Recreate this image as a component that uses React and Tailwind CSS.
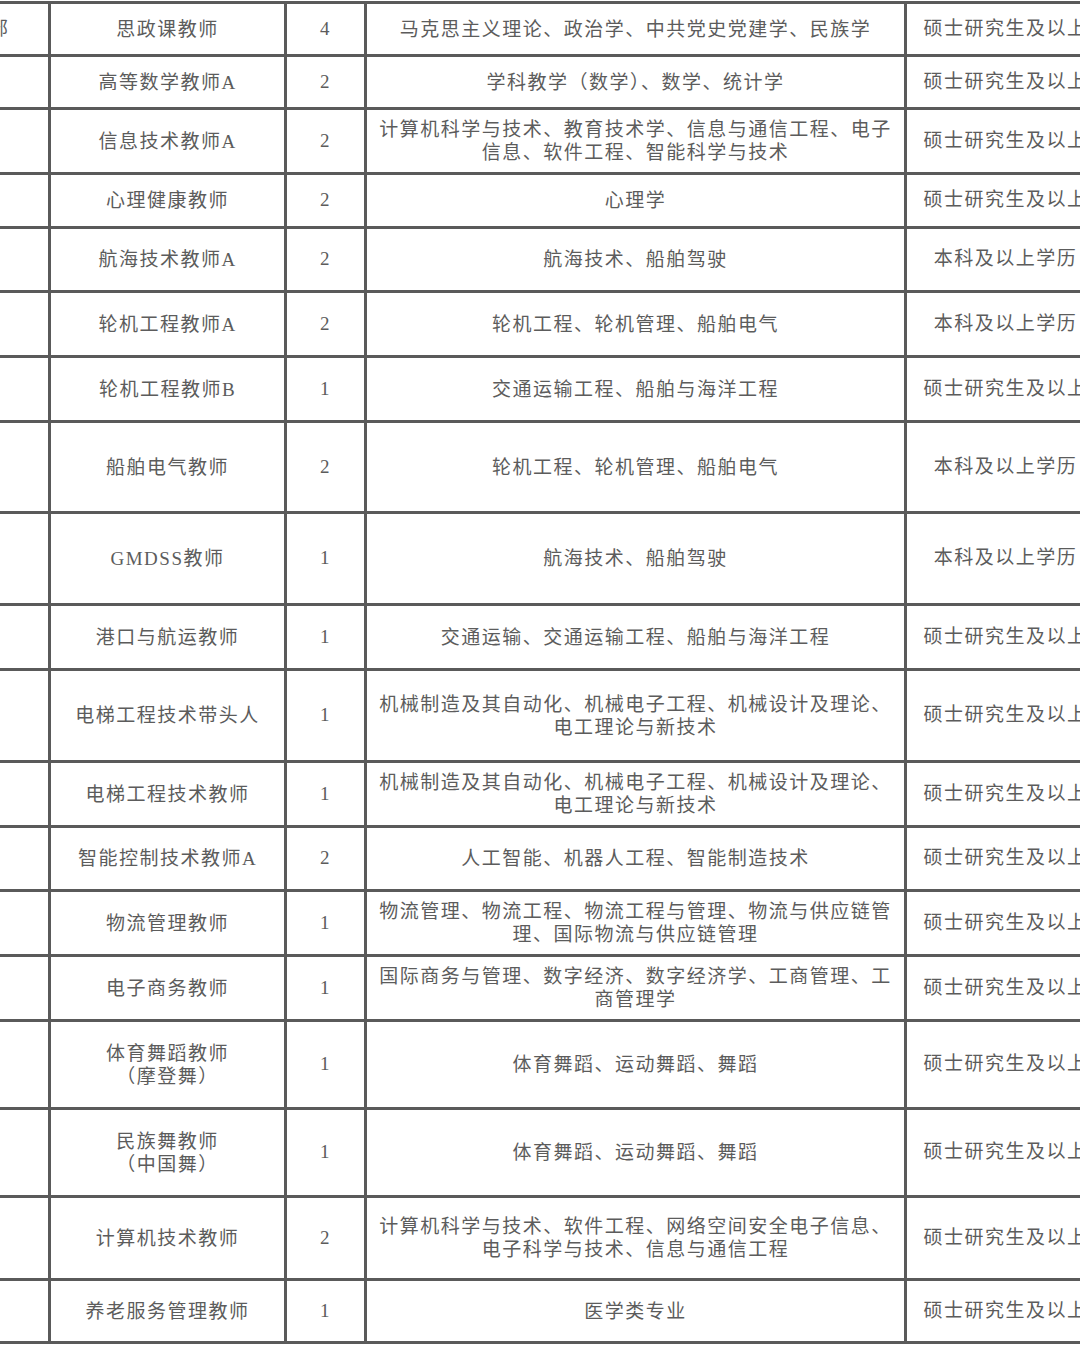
import React from "react";

const BK = "本科及以上学历";
const MS = "硕士研究生及以上";

const rows = [
  { h: "h-[53px]", name: ["思政课教师"], n: "4", major: ["马克思主义理论、政治学、中共党史党建学、民族学"], edu: MS, dept: "部" },
  { h: "h-[53px]", name: ["高等数学教师A"], n: "2", major: ["学科教学（数学）、数学、统计学"], edu: MS },
  { h: "h-[65px]", name: ["信息技术教师A"], n: "2", major: ["计算机科学与技术、教育技术学、信息与通信工程、电子", "信息、软件工程、智能科学与技术"], edu: MS },
  { h: "h-[54px]", name: ["心理健康教师"], n: "2", major: ["心理学"], edu: MS },
  { h: "h-[64px]", name: ["航海技术教师A"], n: "2", major: ["航海技术、船舶驾驶"], edu: BK },
  { h: "h-[65px]", name: ["轮机工程教师A"], n: "2", major: ["轮机工程、轮机管理、船舶电气"], edu: BK },
  { h: "h-[65px]", name: ["轮机工程教师B"], n: "1", major: ["交通运输工程、船舶与海洋工程"], edu: MS },
  { h: "h-[91px]", name: ["船舶电气教师"], n: "2", major: ["轮机工程、轮机管理、船舶电气"], edu: BK },
  { h: "h-[92px]", name: ["GMDSS教师"], n: "1", major: ["航海技术、船舶驾驶"], edu: BK },
  { h: "h-[65px]", name: ["港口与航运教师"], n: "1", major: ["交通运输、交通运输工程、船舶与海洋工程"], edu: MS },
  { h: "h-[92px]", name: ["电梯工程技术带头人"], n: "1", major: ["机械制造及其自动化、机械电子工程、机械设计及理论、", "电工理论与新技术"], edu: MS },
  { h: "h-[65px]", name: ["电梯工程技术教师"], n: "1", major: ["机械制造及其自动化、机械电子工程、机械设计及理论、", "电工理论与新技术"], edu: MS },
  { h: "h-[64px]", name: ["智能控制技术教师A"], n: "2", major: ["人工智能、机器人工程、智能制造技术"], edu: MS },
  { h: "h-[65px]", name: ["物流管理教师"], n: "1", major: ["物流管理、物流工程、物流工程与管理、物流与供应链管", "理、国际物流与供应链管理"], edu: MS },
  { h: "h-[65px]", name: ["电子商务教师"], n: "1", major: ["国际商务与管理、数字经济、数字经济学、工商管理、工", "商管理学"], edu: MS },
  { h: "h-[88px]", name: ["体育舞蹈教师", "（摩登舞）"], n: "1", major: ["体育舞蹈、运动舞蹈、舞蹈"], edu: MS },
  { h: "h-[88px]", name: ["民族舞教师", "（中国舞）"], n: "1", major: ["体育舞蹈、运动舞蹈、舞蹈"], edu: MS },
  { h: "h-[83px]", name: ["计算机技术教师"], n: "2", major: ["计算机科学与技术、软件工程、网络空间安全电子信息、", "电子科学与技术、信息与通信工程"], edu: MS },
  { h: "h-[63px]", name: ["养老服务管理教师"], n: "1", major: ["医学类专业"], edu: MS },
];

function Lines({ lines }) {
  return (
    <div className="flex flex-col items-center leading-[23px] whitespace-nowrap">
      {lines.map((l, i) => (
        <span key={i}>{l}</span>
      ))}
    </div>
  );
}

export default function App() {
  return (
    <div
      className="w-[1080px] h-[1346px] overflow-hidden bg-white pt-[1px] text-[19px] tracking-[1.5px] text-[#5c5c5c]"
      style={{ fontFamily: '"Liberation Serif", "Noto Sans CJK SC", serif' }}
    >
      <div className="w-[1110px] border-t-[3px] border-[#5a5a5a]">
        {rows.map((r, i) => (
          <div key={i} className={`flex ${r.h} border-b-[3px] border-[#5a5a5a]`}>
            <div className="w-[51px] shrink-0 flex items-center border-r-[3px] border-[#5a5a5a] overflow-hidden">
              {r.dept && <span className="-ml-[11px]">{r.dept}</span>}
            </div>
            <div className="w-[236px] shrink-0 flex items-center justify-center border-r-[3px] border-[#5a5a5a]">
              <Lines lines={r.name} />
            </div>
            <div className="w-[80px] shrink-0 flex items-center justify-center border-r-[3px] border-[#5a5a5a]">
              {r.n}
            </div>
            <div className="w-[540px] shrink-0 flex items-center justify-center border-r-[3px] border-[#5a5a5a]">
              <Lines lines={r.major} />
            </div>
            <div className="w-[200px] shrink-0 flex items-center justify-center border-r-[3px] border-[#5a5a5a] whitespace-nowrap">
              {r.edu}
            </div>
          </div>
        ))}
      </div>
    </div>
  );
}
